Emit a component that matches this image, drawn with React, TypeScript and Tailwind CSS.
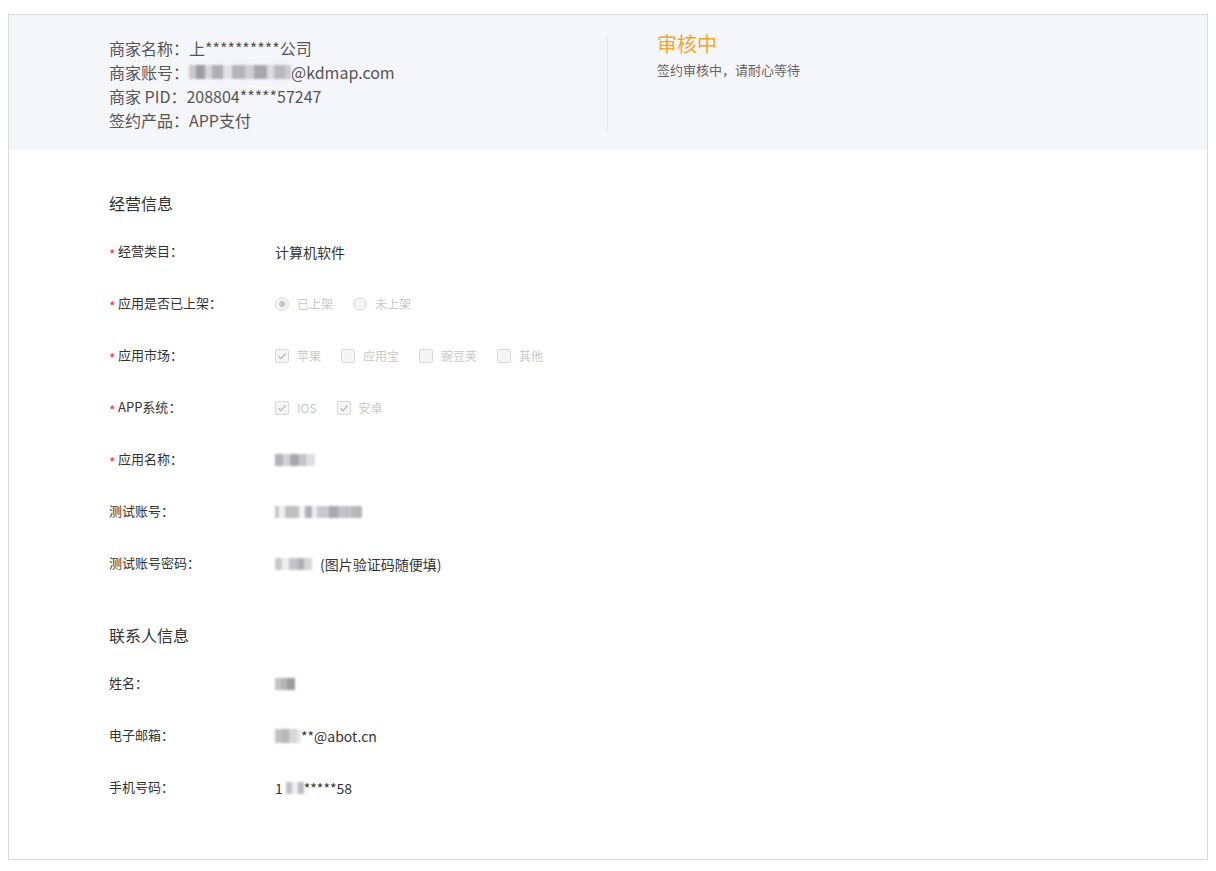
import React from 'react';

const font = { fontFamily: '"Microsoft YaHei", "Noto Sans CJK SC", "Noto Sans", sans-serif' };

// 打码区域：一串灰色小块再模糊一下
const Mosaic = ({ cells, h = 14 }: { cells: [number, string][]; h?: number }) => (
  <span className="inline-flex items-center align-middle blur-[0.8px]">
    {cells.map(([w, c], i) => (
      <span key={i} className="inline-block" style={{ width: w, height: h, background: c }} />
    ))}
  </span>
);

const Radio = ({ checked, label }: { checked?: boolean; label: string }) => (
  <span className="flex items-center gap-2 mr-5">
    <span className="w-[14px] h-[14px] rounded-full border border-[#d9d9d9] bg-[#f5f5f5] flex items-center justify-center">
      {checked && <span className="w-[6px] h-[6px] rounded-full bg-[#c8c8c8]" />}
    </span>
    <span className="text-[12px] text-[#c8c8c8]">{label}</span>
  </span>
);

const Check = ({ checked, label }: { checked?: boolean; label: string }) => (
  <span className="flex items-center gap-2 mr-[20px]">
    <span className="w-[14px] h-[14px] rounded-[2px] border border-[#d9d9d9] bg-[#f5f5f5] flex items-center justify-center">
      {checked && (
        <svg width="10" height="10" viewBox="0 0 10 10" fill="none">
          <path d="M1.5 5.2 L4 7.6 L8.6 2.4" stroke="#b8b8b8" strokeWidth="1.3" />
        </svg>
      )}
    </span>
    <span className="text-[12px] text-[#c8c8c8]">{label}</span>
  </span>
);

const Row = ({ label, required, children }: { label: string; required?: boolean; children: React.ReactNode }) => (
  <div className="h-[52px] flex items-center">
    <div className="w-[166px] flex items-center text-[13px] text-[#333]">
      {required ? <span className="text-[#e4393c] text-[14px] leading-none w-[9px] mt-[5px]">*</span> : null}
      <span>{label}：</span>
    </div>
    <div className="flex items-center text-[14px] text-[#333] mt-[2px]">{children}</div>
  </div>
);

export default function App() {
  return (
    <div className="min-h-screen bg-white pt-[14px] pl-2" style={font}>
      <div className="w-[1200px] h-[846px] border border-[#dcdcdc] bg-white">
        {/* 顶部商家信息 */}
        <div className="flex bg-[#f5f6fa] pt-[21px] pb-[18px]">
          <div className="w-[598px] pl-[100px] text-[16px] leading-[24px] text-[#555]">
            <div>商家名称：上**********公司</div>
            <div className="flex items-center">
              商家账号：
              <Mosaic
                cells={[
                  [7, '#c9c9cc'], [9, '#9d9da2'], [7, '#d6d6d8'], [11, '#aeaeb3'], [9, '#e2e2e4'],
                  [13, '#b4b4b8'], [9, '#cfcfd2'], [13, '#a6a6ab'], [7, '#dcdcde'], [11, '#b9b9bd'], [6, '#cbcbce'],
                ]}
              />
              @kdmap.com
            </div>
            <div>商家 PID：208804*****57247</div>
            <div>签约产品：APP支付</div>
          </div>
          <div className="w-px bg-[#e6e7eb]" />
          <div className="pl-[49px] -mt-[6px]">
            <div className="text-[20px] leading-[28px] text-[#f5a623]">审核中</div>
            <div className="text-[13px] leading-[20px] text-[#666] mt-[2px]">签约审核中，请耐心等待</div>
          </div>
        </div>

        {/* 经营信息 */}
        <div className="pl-[100px] pt-[41px]">
          <div className="text-[16px] leading-[24px] text-[#333] mb-[10px]">经营信息</div>
          <Row label="经营类目" required>计算机软件</Row>
          <Row label="应用是否已上架" required>
            <Radio checked label="已上架" />
            <Radio label="未上架" />
          </Row>
          <Row label="应用市场" required>
            <Check checked label="苹果" />
            <Check label="应用宝" />
            <Check label="豌豆荚" />
            <Check label="其他" />
          </Row>
          <Row label="APP系统" required>
            <Check checked label="IOS" />
            <Check checked label="安卓" />
          </Row>
          <Row label="应用名称" required>
            <Mosaic cells={[[8, '#b4b4b8'], [7, '#d2d2d4'], [9, '#a9a9ad'], [7, '#c4c4c8'], [9, '#dedee6']]} h={12} />
          </Row>
          <Row label="测试账号">
            <Mosaic
              cells={[
                [4, '#c6c6c8'], [6, '#f0f0f0'], [14, '#c0c0c3'], [6, '#f2f2f2'], [7, '#b0b0b4'], [5, '#eeeeee'],
                [12, '#c8c8cb'], [9, '#aaaaae'], [14, '#c2c2c5'], [10, '#b6b6ba'],
              ]}
              h={12}
            />
          </Row>
          <Row label="测试账号密码">
            <Mosaic cells={[[7, '#cacacc'], [7, '#eeeeee'], [9, '#c4c4c7'], [6, '#b0b0b4'], [8, '#d6d6d8']]} h={12} />
            <span className="ml-[8px]">(图片验证码随便填)</span>
          </Row>

          {/* 联系人信息 */}
          <div className="text-[16px] leading-[24px] text-[#333] mt-[34px] mb-[10px]">联系人信息</div>
          <Row label="姓名">
            <Mosaic cells={[[6, '#c4c4c7'], [6, '#b4b4b8'], [8, '#9c9ca0']]} h={12} />
          </Row>
          <Row label="电子邮箱">
            <Mosaic cells={[[7, '#c4c4c7'], [7, '#b8b8bb'], [8, '#d6d6d8'], [4, '#eaeaea']]} h={14} />
            <span>**@abot.cn</span>
          </Row>
          <Row label="手机号码">
            <span>1</span>
            <Mosaic cells={[[3, '#ffffff'], [6, '#c2c2c5'], [6, '#eeeeee'], [6, '#bcbcc0']]} h={12} />
            <span>*****58</span>
          </Row>
        </div>
      </div>
    </div>
  );
}
